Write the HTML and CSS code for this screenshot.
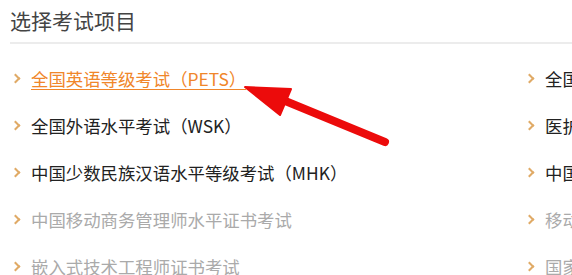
FILE: index.html
```html
<!DOCTYPE html>
<html lang="zh-CN">
<head>
  <meta charset="UTF-8" />
  <meta name="viewport" content="width=device-width, initial-scale=1" />
  <title>选择考试项目</title>
  <link rel="stylesheet" href="styles.css">
</head>
<body>

<div class="exam-box">
  <h2 class="exam-title">选择考试项目</h2>

  <!-- two columns of exams -->
  <ul class="exam-list">
    <li class="exam-item active"><a href="#">全国英语等级考试（PETS）</a></li>
    <li class="exam-item"><a href="#">全国计算机等级考试（NCRE）</a></li>
    <li class="exam-item"><a href="#">全国外语水平考试（WSK）</a></li>
    <li class="exam-item"><a href="#">医护英语水平考试（METS）</a></li>
    <li class="exam-item"><a href="#">中国少数民族汉语水平等级考试（MHK）</a></li>
    <li class="exam-item"><a href="#">中国汉语水平考试（HSK）</a></li>
    <li class="exam-item off"><a href="#">中国移动商务管理师水平证书考试</a></li>
    <li class="exam-item off"><a href="#">移动互联网应用开发证书考试</a></li>
    <li class="exam-item off"><a href="#">嵌入式技术工程师证书考试</a></li>
    <li class="exam-item off"><a href="#">国家职业资格证书考试</a></li>
  </ul>

  <!-- red arrow pointing at the chosen exam -->
  <svg class="pointer" width="160" height="70" viewBox="0 0 160 70" aria-hidden="true">
    <line x1="40" y1="18" x2="147" y2="62" stroke="#ec0b0b" stroke-width="8" stroke-linecap="round" />
    <polygon points="7,7 53,9 42,35" fill="#ec0b0b" stroke="#ec0b0b" stroke-width="2" stroke-linejoin="round" />
  </svg>
</div>

</body>
</html>
```

FILE: styles.css
```css
body {
  margin: 0;
  background: #fff;
  font-family: "Noto Sans CJK SC", "Microsoft YaHei", sans-serif;
  overflow: hidden;
}

.exam-box {
  position: relative;
  padding: 0 0 0 10px;
  width: 1100px;
}

.exam-title {
  margin: 0;
  height: 42px;
  line-height: 40px;
  font-size: 21px;
  font-weight: 400;
  color: #444;
  border-bottom: 2px solid #ececec;
}

.exam-list {
  list-style: none;
  margin: 11px 0 0;
  padding: 0;
  display: grid;
  grid-template-columns: 514px 514px;
  grid-auto-rows: 47px;
}

.exam-item {
  position: relative;
  padding-left: 21px;
  line-height: 47px;
  font-size: 17.4px;
  white-space: nowrap;
}

.exam-item::before {
  content: "";
  position: absolute;
  left: 2px;
  top: 20px;
  width: 5px;
  height: 5px;
  border-top: 2px solid #e0aa66;
  border-right: 2px solid #e0aa66;
  transform: rotate(45deg);
}

.exam-item a {
  color: #222;
  text-decoration: none;
}

.exam-item.active a {
  color: #f0862a;
  text-decoration: underline;
  text-underline-offset: 3px;
}

.exam-item.off a {
  color: #aaa;
}

.pointer {
  position: absolute;
  left: 238px;
  top: 80px;
}
```
